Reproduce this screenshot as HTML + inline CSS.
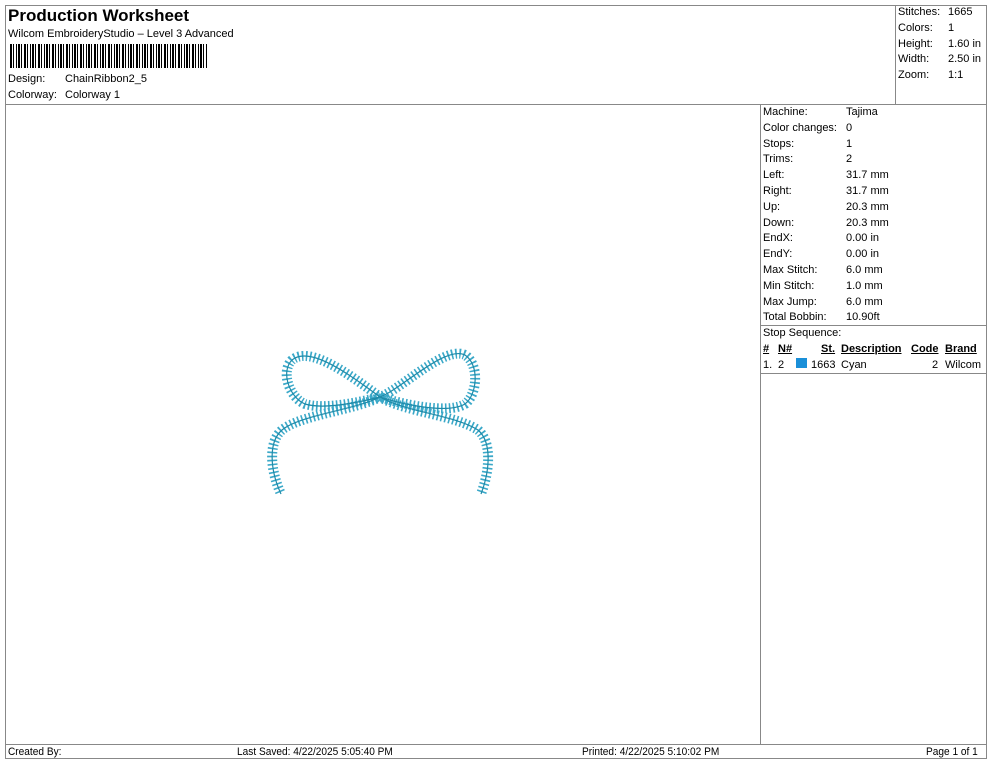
<!DOCTYPE html>
<html><head><meta charset="utf-8"><style>
*{margin:0;padding:0;box-sizing:border-box}
body{width:990px;height:762px;background:#fff;font-family:"Liberation Sans",Arial,sans-serif;color:#000;position:relative;overflow:hidden}
.a{position:absolute;white-space:nowrap}
.hl{position:absolute;background:#888;height:1px}
.vl{position:absolute;background:#888;width:1px}
.s{font-size:11px}
.r{font-size:11px;line-height:15.8px}
</style></head><body>
<div class="hl" style="left:5px;top:5px;width:981px"></div>
<div class="hl" style="left:5px;top:104px;width:981px"></div>
<div class="hl" style="left:5px;top:744px;width:981px"></div>
<div class="hl" style="left:5px;top:758px;width:981px"></div>
<div class="vl" style="left:5px;top:5px;height:754px"></div>
<div class="vl" style="left:986px;top:5px;height:754px"></div>
<div class="vl" style="left:895px;top:5px;height:99px"></div>
<div class="vl" style="left:760px;top:104px;height:640px"></div>
<div class="hl" style="left:760px;top:325px;width:226px"></div>
<div class="hl" style="left:760px;top:373px;width:226px"></div>

<div class="a" style="left:8px;top:6px;font-size:17px;font-weight:bold">Production Worksheet</div>
<div class="a s" style="left:8px;top:28px">Wilcom EmbroideryStudio – Level 3 Advanced</div>
<div class="a" style="left:10px;top:44px;width:197px;height:24px;background:repeating-linear-gradient(90deg,#000 0 2px,#fff 2px 3px,#000 3px 4px,#fff 4px 6px,#000 6px 7px,#fff 7px 8px,#000 8px 10px,#fff 10px 11px,#000 11px 12px,#fff 12px 14px)"></div>
<div class="a s" style="left:8px;top:73px">Design:</div>
<div class="a s" style="left:65px;top:73px">ChainRibbon2_5</div>
<div class="a s" style="left:8px;top:89px">Colorway:</div>
<div class="a s" style="left:65px;top:89px">Colorway 1</div>

<div class="a r" style="left:898px;top:5px">Stitches:<br>Colors:<br>Height:<br>Width:<br>Zoom:</div>
<div class="a r" style="left:948px;top:5px">1665<br>1<br>1.60 in<br>2.50 in<br>1:1</div>

<div class="a r" style="left:763px;top:105px">Machine:<br>Color changes:<br>Stops:<br>Trims:<br>Left:<br>Right:<br>Up:<br>Down:<br>EndX:<br>EndY:<br>Max Stitch:<br>Min Stitch:<br>Max Jump:<br>Total Bobbin:<br>Stop Sequence:</div>
<div class="a r" style="left:846px;top:105px">Tajima<br>0<br>1<br>2<br>31.7 mm<br>31.7 mm<br>20.3 mm<br>20.3 mm<br>0.00 in<br>0.00 in<br>6.0 mm<br>1.0 mm<br>6.0 mm<br>10.90ft</div>
<div class="a s" style="left:763px;top:343px;font-weight:bold;text-decoration:underline">#</div>
<div class="a s" style="left:778px;top:343px;font-weight:bold;text-decoration:underline">N#</div>
<div class="a s" style="left:821px;top:343px;font-weight:bold;text-decoration:underline">St.</div>
<div class="a s" style="left:841px;top:343px;font-weight:bold;text-decoration:underline">Description</div>
<div class="a s" style="left:911px;top:343px;font-weight:bold;text-decoration:underline">Code</div>
<div class="a s" style="left:945px;top:343px;font-weight:bold;text-decoration:underline">Brand</div>
<div class="a s" style="left:763px;top:359px">1.</div>
<div class="a s" style="left:778px;top:359px">2</div>
<div class="a" style="left:796px;top:358px;width:11px;height:10px;background:#1a8fd8"></div>
<div class="a s" style="left:811px;top:359px">1663</div>
<div class="a s" style="left:841px;top:359px">Cyan</div>
<div class="a s" style="left:932px;top:359px">2</div>
<div class="a s" style="left:945px;top:359px">Wilcom</div>

<div class="a" style="left:8px;top:746px;font-size:11px;transform:scaleX(.92);transform-origin:left">Created By:</div>
<div class="a" style="left:237px;top:746px;font-size:11px;transform:scaleX(.92);transform-origin:left">Last Saved: 4/22/2025 5:05:40 PM</div>
<div class="a" style="left:582px;top:746px;font-size:11px;transform:scaleX(.92);transform-origin:left">Printed: 4/22/2025 5:10:02 PM</div>
<div class="a" style="left:926px;top:746px;font-size:11px;transform:scaleX(.92);transform-origin:left">Page 1 of 1</div>

<svg class="a" style="left:0;top:0" width="990" height="762">
<g fill="none" stroke-linecap="butt">
<path d="M380 397 C350 375 310 345 292 360 C280 372 290 398 305 404 C325 410 360 402 380 397 C400 390 445 345 465 355 C480 365 477 395 465 404 C448 414 405 405 380 397 C355 410 300 415 282 430 C268 442 270 470 281 494 M380 397 C405 412 455 415 478 430 C492 442 490 470 481 494" stroke="#3aa8c8" stroke-width="10" stroke-dasharray="1.6 2.4"/>
<path d="M380 397 C350 375 310 345 292 360 C280 372 290 398 305 404 C325 410 360 402 380 397 C400 390 445 345 465 355 C480 365 477 395 465 404 C448 414 405 405 380 397 C355 410 300 415 282 430 C268 442 270 470 281 494 M380 397 C405 412 455 415 478 430 C492 442 490 470 481 494" stroke="#1f8aa8" stroke-width="1.2"/>
</g>
</svg>
</body></html>
